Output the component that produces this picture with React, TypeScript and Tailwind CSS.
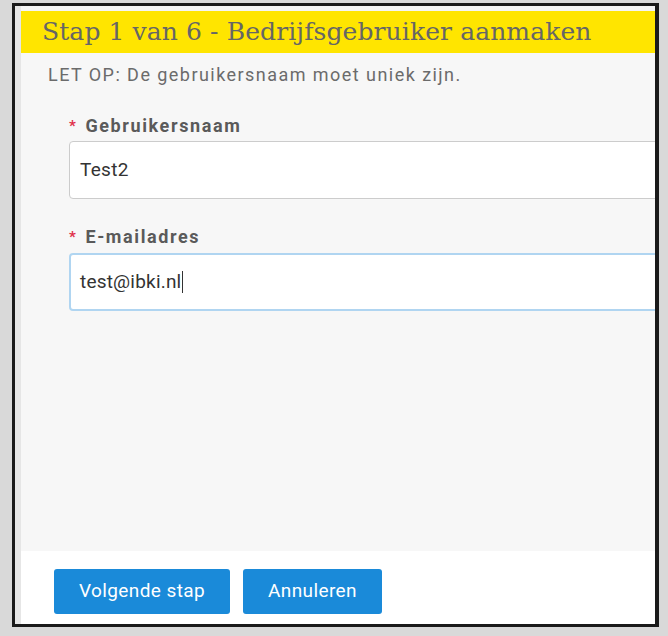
import React from 'react';

export default function App() {
  return (
    <div className="w-[668px] h-[636px] bg-[#d9d9d9] pt-[3px] pl-[12px] overflow-hidden">
      <div className="w-[647px] h-[624px] border-[3px] border-r-[4px] border-[#1a1a1a] bg-[#e6e6e6] pl-[6px] flex flex-col overflow-hidden">
        <div className="h-[5px] bg-[#f4f4f4] shrink-0" />
        <div className="h-[42px] bg-[#ffe500] flex items-center pl-[21px] shrink-0">
          <h1
            className="text-[25px] text-[#666666] whitespace-nowrap tracking-[0.1px]"
            style={{ fontFamily: '"DejaVu Serif", serif' }}
          >
            Stap 1 van 6 - Bedrijfsgebruiker aanmaken
          </h1>
        </div>
        <div
          className="flex-1 bg-[#f7f7f7] overflow-hidden"
          style={{ fontFamily: 'Roboto, "Liberation Sans", sans-serif' }}
        >
          <p className="pl-[27px] pt-[12px] text-[18px] text-[#6b6b6b] leading-[20px] tracking-[1.45px] whitespace-nowrap">
            LET OP: De gebruikersnaam moet uniek zijn.
          </p>
          <div className="pl-[48px] pt-[31px]">
            <label className="flex items-center gap-[8px] text-[18px] font-bold text-[#5a5a5a] leading-[20px] tracking-[1.6px]">
              <span className="text-[#e0304a] text-[15px]">*</span>
              Gebruikersnaam
            </label>
            <div className="mt-[5px] h-[58px] -mr-[10px] bg-white border border-[#cccccc] rounded-[4px] flex items-center pl-[10px] text-[19px] text-[#333333] tracking-[0.3px]">
              Test2
            </div>
            <label className="mt-[28px] flex items-center gap-[8px] text-[18px] font-bold text-[#5a5a5a] leading-[20px] tracking-[1.6px]">
              <span className="text-[#e0304a] text-[15px]">*</span>
              E-mailadres
            </label>
            <div className="mt-[6px] h-[58px] -mr-[10px] bg-white border-2 border-[#b0d5f1] rounded-[4px] flex items-center pl-[9px] text-[19px] text-[#333333] tracking-[0.2px]">
              test@ibki.nl
              <span className="inline-block w-[1px] h-[22px] bg-[#333333] ml-[1px]" />
            </div>
          </div>
        </div>
        <div
          className="h-[73px] bg-white flex items-start gap-[13px] pl-[33px] pt-[18px] shrink-0"
          style={{ fontFamily: 'Roboto, "Liberation Sans", sans-serif' }}
        >
          <button className="w-[176px] h-[45px] bg-[#1a8ad9] rounded-[3px] text-white text-[19px] tracking-[0.4px]">
            Volgende stap
          </button>
          <button className="w-[139px] h-[45px] bg-[#1a8ad9] rounded-[3px] text-white text-[19px] tracking-[0.4px]">
            Annuleren
          </button>
        </div>
      </div>
    </div>
  );
}
